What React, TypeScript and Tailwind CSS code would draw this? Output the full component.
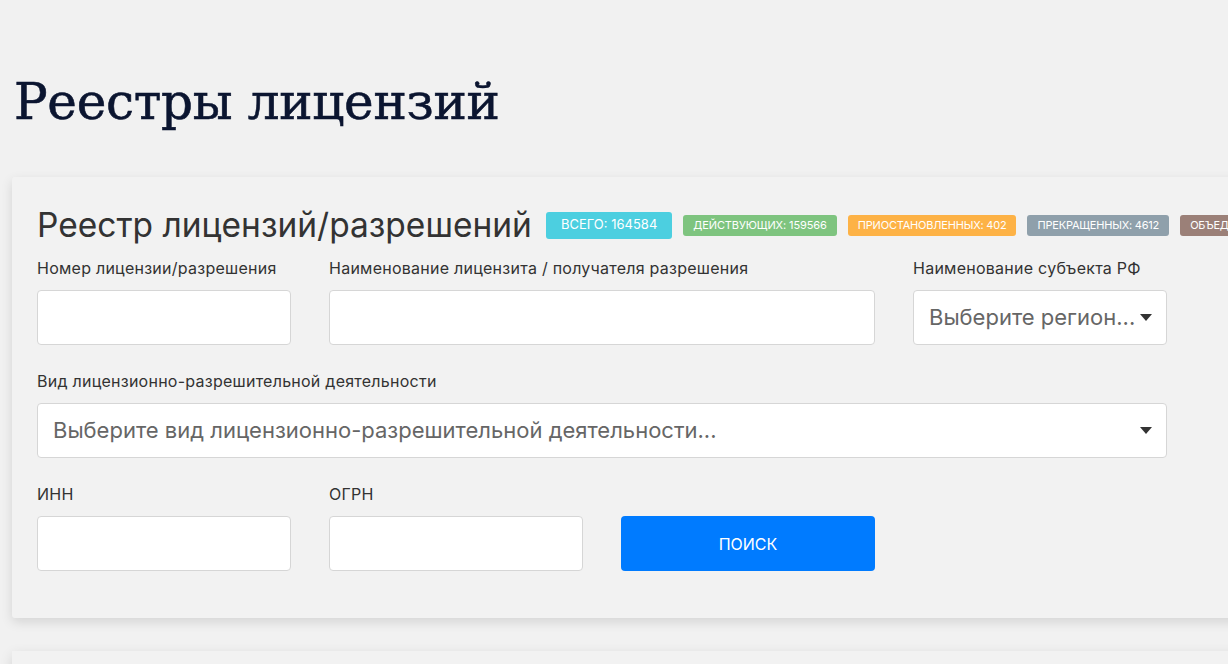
import React from "react";

const sans = "font-['Inter','Noto_Sans',sans-serif]";

function Caret() {
  return (
    <svg width="12" height="7" viewBox="0 0 12 7" className="shrink-0">
      <path d="M0 0h12L6 7z" fill="#333" />
    </svg>
  );
}

function Label({ text }: { text: string }) {
  return <div className="text-[16px] leading-[22px] tracking-[0.25px] text-[#333] mb-[11px] whitespace-nowrap">{text}</div>;
}

function Field({ label, wide }: { label: string; wide?: boolean }) {
  return (
    <div className={wide ? "col-span-2" : ""}>
      <Label text={label} />
      <input className="block w-full h-[55px] bg-white border border-[#d6d6d6] rounded-[4px] outline-none px-3" />
    </div>
  );
}

function Select({ label, placeholder, span }: { label: string; placeholder: string; span: string }) {
  return (
    <div className={span}>
      <Label text={label} />
      <div className="h-[55px] bg-white border border-[#d6d6d6] rounded-[4px] flex items-center justify-between pl-[15px] pr-[14px]">
        <span className="text-[22px] text-[#666] whitespace-nowrap overflow-hidden">{placeholder}</span>
        <Caret />
      </div>
    </div>
  );
}

const badges = [
  { text: "ВСЕГО: 164584", cls: "bg-[#4ccfe0] h-[27px] px-[15px] text-[13px]" },
  { text: "ДЕЙСТВУЮЩИХ: 159566", cls: "bg-[#7ec47f] h-[21px] px-[10px] text-[11px] tracking-[-0.1px]" },
  { text: "ПРИОСТАНОВЛЕННЫХ: 402", cls: "bg-[#fdb246] h-[21px] px-[10px] text-[11px] tracking-[-0.2px]" },
  { text: "ПРЕКРАЩЕННЫХ: 4612", cls: "bg-[#8fa0ab] h-[21px] px-[10px] text-[11px] tracking-[-0.2px]" },
  { text: "ОБЪЕДИНЕННЫХ: 0", cls: "bg-[#9b8078] h-[21px] px-[10px] text-[11px] tracking-[-0.2px]" },
];

export default function App() {
  return (
    <div className={`min-h-screen w-full overflow-hidden bg-[#f1f1f1] ${sans}`}>
      <h1 className="pt-[69px] pl-[14px] font-['DejaVu_Serif',serif] text-[50px] leading-[67px] tracking-[-0.3px] text-[#0b1530] whitespace-nowrap [-webkit-text-stroke:0.6px_#0b1530]">
        Реестры лицензий
      </h1>

      <div className="mt-[41px] ml-[12px] w-[1250px] bg-[#f2f2f2] rounded-[3px] shadow-[0_4px_12px_rgba(0,0,0,0.12)] pl-[25px] pt-[26px] pb-[47px]">
        <div className="flex items-center whitespace-nowrap">
          <h2 className="text-[33.5px] leading-[44px] text-[#333] mr-[14px]">Реестр лицензий/разрешений</h2>
          <div className="flex items-center gap-[11px]">
            {badges.map((b) => (
              <span key={b.text} className={`${b.cls} rounded-[3px] text-white flex items-center uppercase`}>
                {b.text}
              </span>
            ))}
          </div>
        </div>

        <div className="w-[1130px] grid grid-cols-4 gap-x-[38px] gap-y-[25px] mt-[10px]">
          <Field label="Номер лицензии/разрешения" />
          <Field label="Наименование лицензита / получателя разрешения" wide />
          <Select label="Наименование субъекта РФ" placeholder="Выберите регион..." span="" />
          <Select
            label="Вид лицензионно-разрешительной деятельности"
            placeholder="Выберите вид лицензионно-разрешительной деятельности..."
            span="col-span-4"
          />
          <Field label="ИНН" />
          <Field label="ОГРН" />
          <div className="flex items-end">
            <button className="w-full h-[55px] bg-[#007bff] rounded-[4px] text-white text-[16px]">ПОИСК</button>
          </div>
        </div>
      </div>

      <div className="mt-[33px] ml-[12px] w-[1250px] h-[200px] bg-[#f2f2f2] shadow-[0_4px_12px_rgba(0,0,0,0.12)]" />
    </div>
  );
}
